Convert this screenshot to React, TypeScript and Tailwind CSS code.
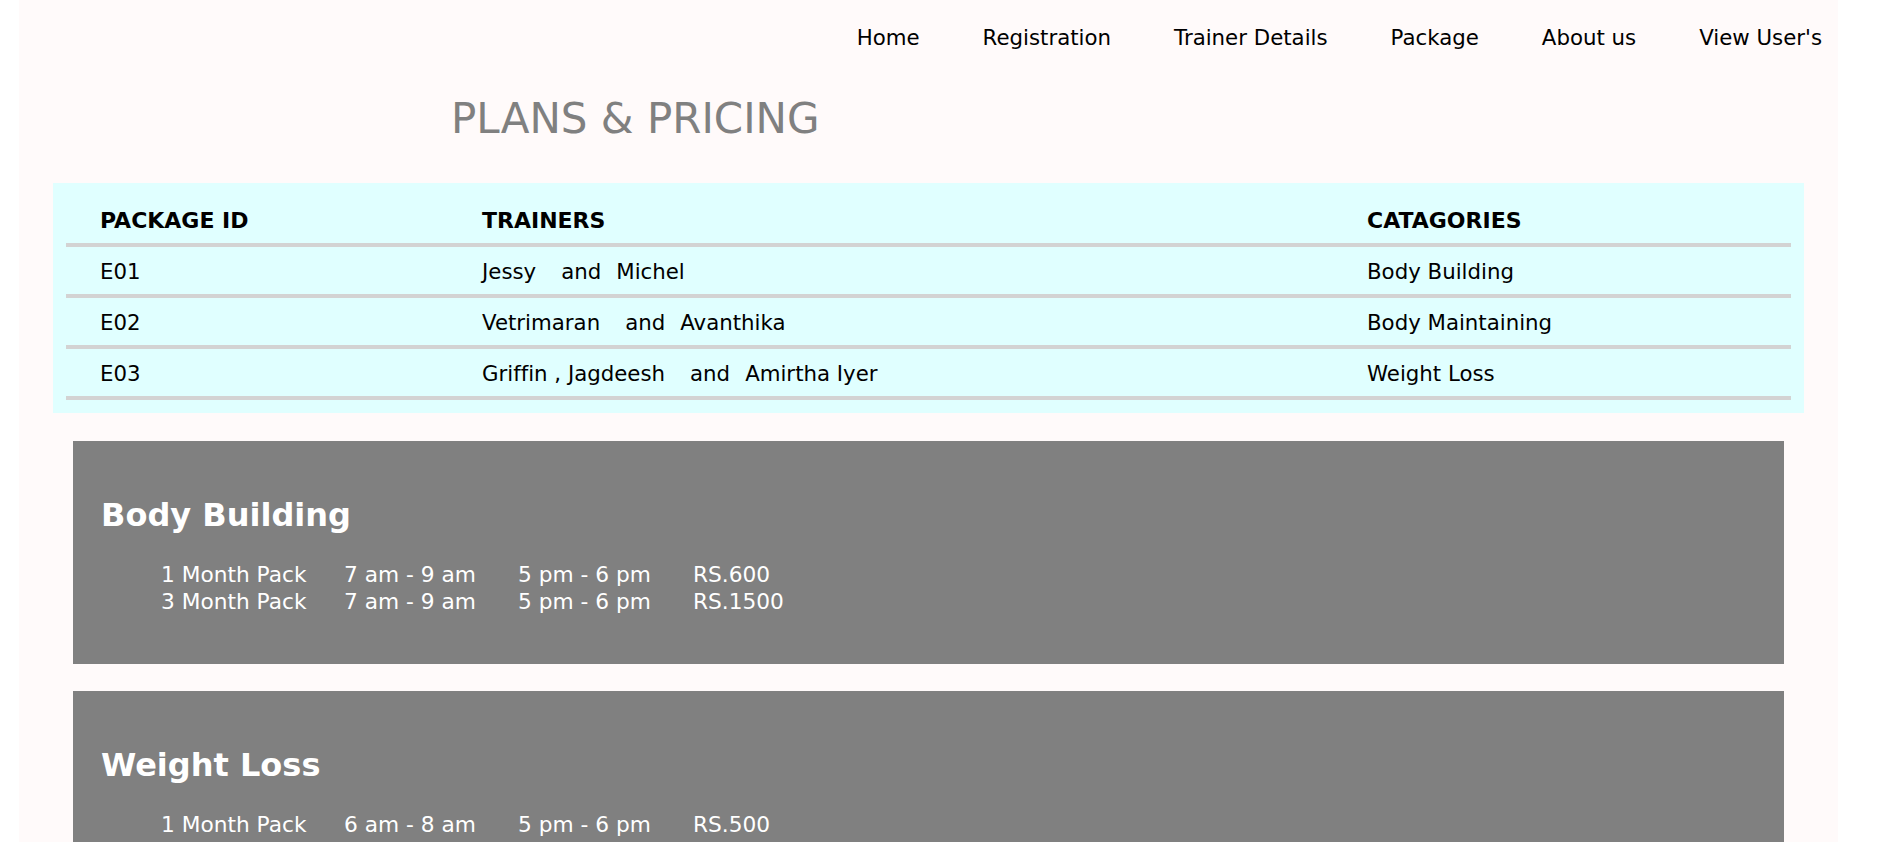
import React from "react";

const navLinks = ["Home", "Registration", "Trainer Details", "Package", "About us", "View User's"];

type Pkg = { id: string; trainers: string; last: string; category: string };

const packages: Pkg[] = [
  { id: "E01", trainers: "Jessy", last: "Michel", category: "Body Building" },
  { id: "E02", trainers: "Vetrimaran", last: "Avanthika", category: "Body Maintaining" },
  { id: "E03", trainers: "Griffin , Jagdeesh", last: "Amirtha Iyer", category: "Weight Loss" },
];

const plans = [
  {
    title: "Body Building",
    rows: [
      ["1 Month Pack", "7 am - 9 am", "5 pm - 6 pm", "RS.600"],
      ["3 Month Pack", "7 am - 9 am", "5 pm - 6 pm", "RS.1500"],
    ],
  },
  {
    title: "Weight Loss",
    rows: [
      ["1 Month Pack", "6 am - 8 am", "5 pm - 6 pm", "RS.500"],
      ["3 Month Pack", "6 am - 8 am", "5 pm - 6 pm", "RS.1200"],
    ],
  },
  {
    title: "Body Maintaining",
    rows: [
      ["1 Month Pack", "6 am - 7 am", "6 pm - 7 pm", "RS.400"],
      ["3 Month Pack", "6 am - 7 am", "6 pm - 7 pm", "RS.1000"],
    ],
  },
];

function PlanCard({ title, rows }: { title: string; rows: string[][] }) {
  return (
    <div className="h-[223px] bg-[#808080] pl-[28px] pt-[56px] text-white">
      <h2 className="text-[32px] font-bold leading-[37px]">{title}</h2>
      <div className="mt-[27px] pl-[60px] text-[21.7px] leading-[27px]">
        {rows.map((r, i) => (
          <div key={i} className="grid grid-cols-[183px_174px_175px_auto]">
            {r.map((c, j) => (
              <span key={j}>{c}</span>
            ))}
          </div>
        ))}
      </div>
    </div>
  );
}

export default function App() {
  return (
    <div className="min-h-screen bg-white font-['DejaVu_Sans','Verdana',sans-serif] text-black [font-variant-ligatures:none]">
      <div className="ml-[19px] w-[1819px] bg-[#fffafa] pb-[40px]">
        {/* top menu */}
        <nav className="flex justify-end gap-[63px] pr-[16px] pt-[26px] text-[21.3px] leading-[24px]">
          {navLinks.map((l) => (
            <a key={l} href="#" className="text-black">
              {l}
            </a>
          ))}
        </nav>

        <h1 className="mt-[45px] pl-[432px] text-[42px] font-normal leading-[48px] text-[#808080]">
          PLANS &amp; PRICING
        </h1>

        {/* package table */}
        <div className="mx-[34px] mt-[40px] bg-[#e0ffff] px-[13px] py-[13px]">
          <div className="grid h-[51px] grid-cols-[382px_885px_1fr] items-center border-b-4 border-[#d3d3d3] pt-[2px] text-[22px] font-bold">
            <div className="pl-[34px]">PACKAGE ID</div>
            <div className="pl-[34px]">TRAINERS</div>
            <div className="pl-[34px]">CATAGORIES</div>
          </div>
          {packages.map((p) => (
            <div
              key={p.id}
              className="grid h-[51px] grid-cols-[382px_885px_1fr] items-center border-b-4 border-[#d3d3d3] pt-[3px] text-[21.3px]"
            >
              <div className="pl-[34px]">{p.id}</div>
              <div className="pl-[34px]">
                {p.trainers}
                <span className="ml-[25px]">and</span>
                <span className="ml-[15px]">{p.last}</span>
              </div>
              <div className="pl-[34px]">{p.category}</div>
            </div>
          ))}
        </div>

        {/* plans */}
        <div className="mx-[54px] mt-[28px] flex flex-col gap-[27px]">
          {plans.map((p) => (
            <PlanCard key={p.title} title={p.title} rows={p.rows} />
          ))}
        </div>
      </div>
    </div>
  );
}
